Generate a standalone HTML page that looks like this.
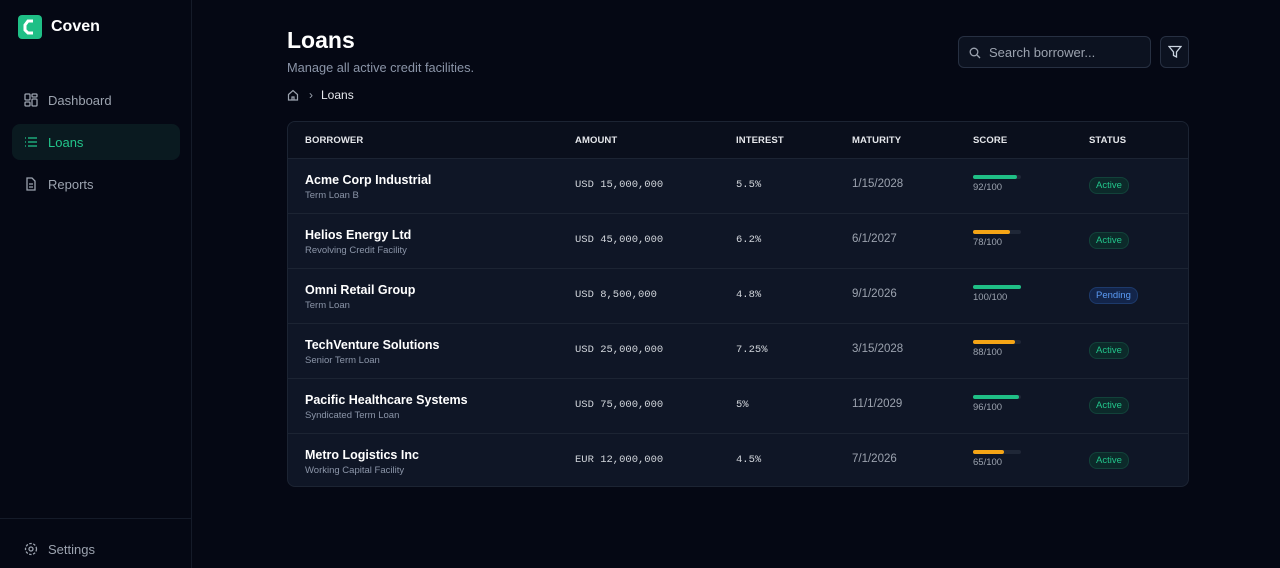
<!DOCTYPE html>
<html><head><meta charset="utf-8"><style>
*{box-sizing:border-box;margin:0;padding:0}
body{width:1280px;height:568px;background:#050814;font-family:"Liberation Sans",sans-serif;color:#e5e7eb;overflow:hidden;position:relative}
.side{position:absolute;left:0;top:0;width:192px;height:568px;border-right:1px solid #151b29;background:#050814}
.logo{position:absolute;left:18px;top:15px;width:24px;height:24px;background:#1fbf86;border-radius:4px}
.brand{position:absolute;left:51px;top:18px;font-size:16px;font-weight:bold;color:#fff}
.nav{position:absolute;left:12px;width:168px;height:36px;border-radius:8px;display:flex;align-items:center;padding-left:12px;font-size:13px;color:#9ca3af}
.nav svg{margin-right:10px}
.nav.act{background:#0a1a20;color:#22c58b}
.setb{position:absolute;left:0;top:518px;width:191px;border-top:1px solid #151b29}
h1{position:absolute;left:287px;top:27px;font-size:23px;color:#fff;font-weight:bold}
.sub{position:absolute;left:287px;top:60px;font-size:12.8px;color:#8b95a8}
.crumb{position:absolute;left:287px;top:88px;font-size:12px;color:#e5e7eb;display:flex;align-items:center}
.search{position:absolute;left:958px;top:36px;width:193px;height:32px;border:1px solid #273042;border-radius:6px;background:#0c1220;font-size:13px;color:#9ca3af;padding:8px 0 0 30px}
.filt{position:absolute;left:1160px;top:36px;width:29px;height:32px;border:1px solid #273042;border-radius:6px;background:#0c1220}
.tbl{position:absolute;left:287px;top:121px;width:902px;height:366px;border:1px solid #1c2433;border-radius:8px;overflow:hidden;background:#0f1626}
.hd{height:36px;background:#0a0f1c;position:relative;font-size:9.5px;font-weight:bold;color:#e5e7eb;letter-spacing:.1px}
.hd span,.row span,.row div.c{position:absolute}
.row{height:55px;position:relative;border-top:1px solid #1c2433}
.nm{left:17px;top:14px;font-size:12.5px;font-weight:bold;color:#fff}
.ty{left:17px;top:31px;font-size:9.5px;color:#8b95a8}
.mono{font-family:"Liberation Mono",monospace;font-size:10.5px;color:#d1d5db;top:20px}
.dt{left:564px;top:19px;font-size:11.5px;color:#9ca3af}
.bar{left:685px;top:16px;width:48px;height:4px;border-radius:2px;background:#1f2737}
.bar i{display:block;height:4px;border-radius:2px}
.sc{left:685px;top:23px;font-size:9.5px;color:#9ca3af}
.bd{left:801px;top:18px;font-size:9.5px;padding:2px 6px;border-radius:8px;border:1px solid #12423a;background:#0c2a2a;color:#22c58b}
.bd.p{background:#13254a;border-color:#1d3a6b;color:#5b9bf5}
</style></head><body>
<div class="side">
<div class="logo"><svg width="24" height="24" viewBox="0 0 24 24"><path d="M15 6 L10 6 L7 10 L7 15 L10 18 L15 18" stroke="#fff" stroke-width="3" fill="none"/></svg></div>
<div class="brand">Coven</div>
<div class="nav" style="top:82px"><svg width="14" height="14" viewBox="0 0 14 14" fill="none" stroke="#9ca3af" stroke-width="1.3"><rect x="1" y="1" width="5" height="6" rx="1"/><rect x="8" y="1" width="5" height="3" rx="1"/><rect x="1" y="9" width="5" height="4" rx="1"/><rect x="8" y="6" width="5" height="7" rx="1"/></svg>Dashboard</div>
<div class="nav act" style="top:124px"><svg width="14" height="14" viewBox="0 0 14 14" fill="none" stroke="#22c58b" stroke-width="1.3"><path d="M1 3h1M1 7h1M1 11h1M4 3h9M4 7h9M4 11h9"/></svg>Loans</div>
<div class="nav" style="top:166px"><svg width="14" height="14" viewBox="0 0 14 14" fill="none" stroke="#9ca3af" stroke-width="1.3"><path d="M3 1h5l3 3v9H3z M5 7h4M5 10h4"/></svg>Reports</div>
<div class="setb"></div>
<div class="nav" style="top:531px"><svg width="14" height="14" viewBox="0 0 14 14" fill="none" stroke="#9ca3af" stroke-width="1.3"><circle cx="7" cy="7" r="2"/><circle cx="7" cy="7" r="5.5" stroke-dasharray="2.5 1.5"/></svg>Settings</div>
</div>
<h1>Loans</h1>
<div class="sub">Manage all active credit facilities.</div>
<div class="crumb"><svg width="12" height="12" viewBox="0 0 12 12" fill="none" stroke="#9ca3af" stroke-width="1.2"><path d="M1.5 5.5L6 1.5l4.5 4V11h-9z M5 11V8h2v3"/></svg><span style="color:#9ca3af;margin:0 8px 0 10px">›</span>Loans</div>
<div class="search"><svg style="position:absolute;left:10px;top:10px" width="12" height="12" viewBox="0 0 12 12" fill="none" stroke="#9ca3af" stroke-width="1.3"><circle cx="5" cy="5" r="3.8"/><path d="M8 8l3 3"/></svg>Search borrower...</div>
<div class="filt"><svg style="position:absolute;left:7px;top:8px" width="14" height="14" viewBox="0 0 14 14" fill="none" stroke="#cbd5e1" stroke-width="1.3"><path d="M1 1.5h12L8.5 7v5l-3-1.5V7z"/></svg></div>
<div class="tbl">
<div class="hd"><span style="left:17px;top:13px">BORROWER</span><span style="left:287px;top:13px">AMOUNT</span><span style="left:448px;top:13px">INTEREST</span><span style="left:564px;top:13px">MATURITY</span><span style="left:685px;top:13px">SCORE</span><span style="left:801px;top:13px">STATUS</span></div>
<div class="row"><span class="nm">Acme Corp Industrial</span><span class="ty">Term Loan B</span><span class="mono" style="left:287px">USD 15,000,000</span><span class="mono" style="left:448px">5.5%</span><span class="dt">1/15/2028</span><div class="c bar"><i style="width:92%;background:#1fbf86"></i></div><span class="sc">92/100</span><span class="bd">Active</span></div>
<div class="row"><span class="nm">Helios Energy Ltd</span><span class="ty">Revolving Credit Facility</span><span class="mono" style="left:287px">USD 45,000,000</span><span class="mono" style="left:448px">6.2%</span><span class="dt">6/1/2027</span><div class="c bar"><i style="width:78%;background:#f5a516"></i></div><span class="sc">78/100</span><span class="bd">Active</span></div>
<div class="row"><span class="nm">Omni Retail Group</span><span class="ty">Term Loan</span><span class="mono" style="left:287px">USD 8,500,000</span><span class="mono" style="left:448px">4.8%</span><span class="dt">9/1/2026</span><div class="c bar"><i style="width:100%;background:#1fbf86"></i></div><span class="sc">100/100</span><span class="bd p">Pending</span></div>
<div class="row"><span class="nm">TechVenture Solutions</span><span class="ty">Senior Term Loan</span><span class="mono" style="left:287px">USD 25,000,000</span><span class="mono" style="left:448px">7.25%</span><span class="dt">3/15/2028</span><div class="c bar"><i style="width:88%;background:#f5a516"></i></div><span class="sc">88/100</span><span class="bd">Active</span></div>
<div class="row"><span class="nm">Pacific Healthcare Systems</span><span class="ty">Syndicated Term Loan</span><span class="mono" style="left:287px">USD 75,000,000</span><span class="mono" style="left:448px">5%</span><span class="dt">11/1/2029</span><div class="c bar"><i style="width:96%;background:#1fbf86"></i></div><span class="sc">96/100</span><span class="bd">Active</span></div>
<div class="row"><span class="nm">Metro Logistics Inc</span><span class="ty">Working Capital Facility</span><span class="mono" style="left:287px">EUR 12,000,000</span><span class="mono" style="left:448px">4.5%</span><span class="dt">7/1/2026</span><div class="c bar"><i style="width:65%;background:#f5a516"></i></div><span class="sc">65/100</span><span class="bd">Active</span></div>
</div>
</body></html>
